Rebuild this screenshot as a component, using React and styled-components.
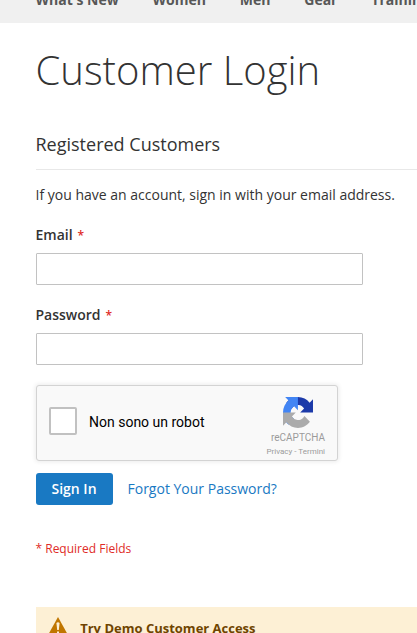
import React from "react";
import styled, { createGlobalStyle } from "styled-components";

const GlobalStyle = createGlobalStyle`
  * { box-sizing: border-box; }
  html, body { margin: 0; padding: 0; height: 633px; overflow: hidden; background: #fff; }
  body { font-family: "Open Sans", sans-serif; font-size: 14px; line-height: 20px; color: #333; }
`;

const Page = styled.div`
  width: 417px;
  height: 633px;
  overflow: hidden;
  background: #fff;
`;

const NavBar = styled.nav`
  display: flex;
  align-items: flex-end;
  gap: 33.8px;
  height: 23px;
  padding: 0 0 13px 35.5px;
  overflow: hidden;
  background: #f0f0f0;
`;

const NavLink = styled.a`
  flex: none;
  font-weight: 700;
  color: #575757;
  white-space: nowrap;
`;

const Main = styled.main`
  display: flex;
  flex-direction: column;
  align-items: flex-start;
  padding-left: 35.5px;
`;

const Title = styled.h1`
  margin: 25px 0 0;
  font-size: 40px;
  line-height: 44px;
  font-weight: 300;
  white-space: nowrap;
`;

const SectionTitle = styled.h2`
  align-self: stretch;
  height: 38px;
  margin: 40px 0 15px;
  border-bottom: 1px solid #e8e8e8;
  font-size: 18px;
  line-height: 24px;
  font-weight: 400;
`;

const Note = styled.p`
  margin: 0 0 20px;
  white-space: nowrap;
`;

const Field = styled.div`
  display: flex;
  flex-direction: column;
  gap: 8px;
  margin-bottom: 20px;
`;

const Label = styled.label`
  height: 20px;
  font-weight: 600;
`;

const Star = styled.span`
  margin-left: 5px;
  font-size: 12px;
  color: #e02b27;
`;

const Input = styled.input`
  display: block;
  width: 327px;
  height: 32px;
  padding: 0 9px;
  border: 1px solid #c2c2c2;
  border-radius: 1px;
  background: #fff;
  outline: none;
`;

const Captcha = styled.div`
  display: flex;
  align-items: center;
  width: 302px;
  height: 76px;
  margin-left: 0.5px;
  padding-left: 12px;
  border: 1px solid #d3d3d3;
  border-radius: 3px;
  background: #f9f9f9;
  box-shadow: 0 0 4px 1px rgba(0, 0, 0, 0.08);
  font-family: Roboto, sans-serif;
`;

const Checkbox = styled.span`
  flex: none;
  width: 28px;
  height: 28px;
  margin-top: -4px;
  border: 2px solid #c1c1c1;
  border-radius: 2px;
  background: #fff;
`;

const CaptchaText = styled.span`
  width: 162px;
  margin: -2px 0 0 12px;
  color: #000;
`;

const Brand = styled.div`
  display: flex;
  flex-direction: column;
  align-items: flex-end;
  align-self: stretch;
  flex: 1;
  padding: 11px 12px 0 0;
  color: #9b9b9b;
`;

const BrandLogo = styled.svg`
  display: block;
  width: 30px;
  height: 31px;
  margin-right: 12px;
`;

const BrandName = styled.span`
  margin-top: 3px;
  font-size: 10px;
  line-height: 13px;
`;

const BrandLinks = styled.span`
  margin-top: 3px;
  font-size: 8px;
  line-height: 10px;
  white-space: nowrap;
`;

const Actions = styled.div`
  display: flex;
  align-items: center;
  gap: 15px;
  margin-top: 12px;
`;

const Button = styled.button`
  width: 77px;
  height: 32px;
  padding: 0;
  border: 0;
  border-radius: 3px;
  background: #1979c3;
  color: #fff;
  font: 600 14px/16px "Open Sans", sans-serif;
`;

const TextLink = styled.a`
  color: #1979c3;
`;

const Required = styled.p`
  margin: 34px 0 49px;
  font-size: 12px;
  line-height: 19px;
  color: #e02b27;
`;

const Notice = styled.section`
  display: flex;
  align-items: flex-start;
  align-self: stretch;
  height: 60px;
  padding: 10px 0 0 12.5px;
  background: #fdf0d5;
`;

const WarningIcon = styled.svg`
  flex: none;
  width: 20px;
  height: 18px;
`;

const NoticeTitle = styled.strong`
  margin: 1px 0 0 12.2px;
  font-size: 13px;
  color: #6f4400;
`;

const navItems = ["What's New", "Women", "Men", "Gear", "Training"];

function RequiredField({ id, label, type }) {
  return (
    <Field>
      <Label htmlFor={id}>
        {label}
        <Star>*</Star>
      </Label>
      <Input id={id} type={type} />
    </Field>
  );
}

function CaptchaLogo() {
  return (
    <BrandLogo viewBox="0 0 64 64" preserveAspectRatio="none" aria-hidden="true">
      <path
        fill="#1c3aa9"
        d="M64 31.955l-.033-1.37V4.687l-7.16 7.16C50.948 4.674 42.033.093 32.05.093c-10.4 0-19.622 4.96-25.458 12.64l11.736 11.86a15.55 15.55 0 0 1 4.754-5.334c2.05-1.6 4.952-2.906 8.968-2.906.485 0 .86.057 1.135.163 4.976.393 9.288 3.14 11.828 7.124l-8.307 8.307L64 31.953"
      />
      <path
        fill="#4285f4"
        d="M31.862.094l-1.37.033H4.594l7.16 7.16C4.58 13.147 0 22.06 0 32.046c0 10.4 4.96 19.622 12.64 25.458L24.5 45.768a15.55 15.55 0 0 1-5.334-4.754c-1.6-2.05-2.906-4.952-2.906-8.968 0-.485.057-.86.163-1.135.393-4.976 3.14-9.288 7.124-11.828l8.307 8.307L31.86.095"
      />
      <path
        fill="#ababab"
        d="M.001 32.045l.033 1.37v25.898l7.16-7.16c5.86 7.173 14.774 11.754 24.76 11.754 10.4 0 19.622-4.96 25.458-12.64l-11.736-11.86a15.55 15.55 0 0 1-4.754 5.334c-2.05 1.6-4.952 2.906-8.968 2.906-.485 0-.86-.057-1.135-.163-4.976-.393-9.288-3.14-11.828-7.124l8.307-8.307c-10.522.04-22.4.066-27.295-.005"
      />
    </BrandLogo>
  );
}

export default function App() {
  return (
    <Page>
      <GlobalStyle />
      <NavBar>
        {navItems.map((item) => (
          <NavLink key={item}>{item}</NavLink>
        ))}
      </NavBar>
      <Main>
        <Title>Customer Login</Title>
        <SectionTitle>Registered Customers</SectionTitle>
        <Note>If you have an account, sign in with your email address.</Note>
        <RequiredField id="email" label="Email" type="email" />
        <RequiredField id="password" label="Password" type="password" />
        <Captcha>
          <Checkbox role="checkbox" aria-checked="false" />
          <CaptchaText>Non sono un robot</CaptchaText>
          <Brand>
            <CaptchaLogo />
            <BrandName>reCAPTCHA</BrandName>
            <BrandLinks>Privacy - Termini</BrandLinks>
          </Brand>
        </Captcha>
        <Actions>
          <Button type="button">Sign In</Button>
          <TextLink>Forgot Your Password?</TextLink>
        </Actions>
        <Required>* Required Fields</Required>
        <Notice>
          <WarningIcon viewBox="0 0 20 18" aria-hidden="true">
            <path fill="#c07600" d="M10 0 20 18H0Z" />
            <path fill="#fdf0d5" d="M8.4 6Q10 4.4 11.6 6L10.8 13H9.2ZM9 14.5h2v2H9Z" />
          </WarningIcon>
          <NoticeTitle>Try Demo Customer Access</NoticeTitle>
        </Notice>
      </Main>
    </Page>
  );
}
